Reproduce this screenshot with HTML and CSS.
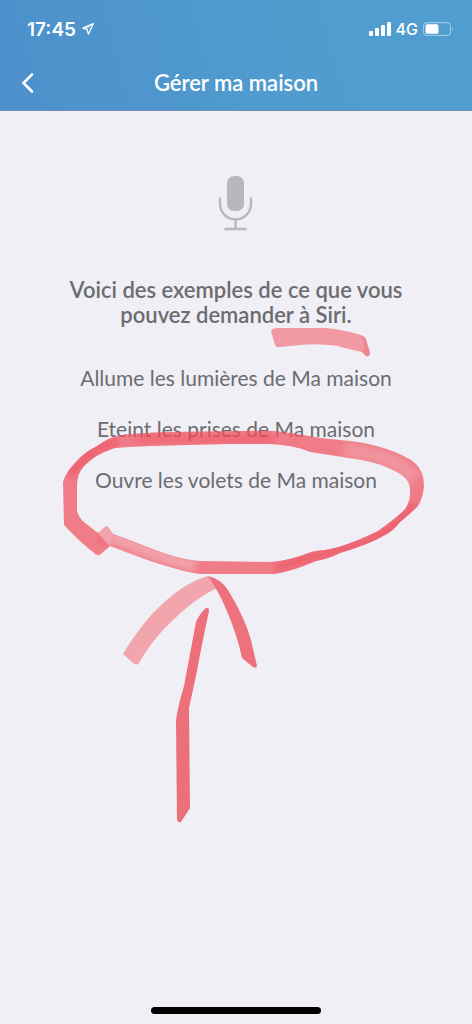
FILE: index.html
```html
<!DOCTYPE html>
<html lang="fr">
<head>
<meta charset="utf-8">
<meta name="viewport" content="width=device-width, initial-scale=1">
<title>Gérer ma maison</title>
<link rel="stylesheet" href="styles.css">
</head>
<body>
<div class="screen">
  <header class="header">
    <div class="status">
      <div class="status-group">
        <span class="time">17:45</span>
        <svg class="location" viewBox="0 0 14 14" aria-hidden="true"><path d="M12.3 1.6 1.8 6.2l4.200 1.300 1.500 4.700z" fill="none" stroke="currentColor" stroke-width="1.3" stroke-linejoin="round"/><path d="M12.3 1.6 6 7.5 1.8 6.2z" fill="currentColor" opacity=".5"/></svg>
      </div>
      <div class="status-group status-right">
        <svg class="signal" viewBox="0 0 22 14" aria-hidden="true"><g fill="currentColor"><rect x="0" y="9" width="4" height="5" rx="1"/><rect x="6" y="6" width="4" height="8" rx="1"/><rect x="12" y="3" width="4" height="11" rx="1"/><rect x="18" y="0" width="4" height="14" rx="1"/></g></svg>
        <span class="network">4G</span>
        <svg class="battery" viewBox="0 0 31 14" aria-hidden="true"><rect x=".6" y=".6" width="26.8" height="12.8" rx="3.5" fill="none" stroke="currentColor" stroke-width="1.2" opacity=".4"/><rect x="2.5" y="2.3" width="13" height="9.5" rx="1.8" fill="currentColor"/><path d="M29 4.8q1.8 2.2 0 4.4z" fill="currentColor" opacity=".6"/></svg>
      </div>
    </div>
    <nav class="nav">
      <button class="back" type="button" aria-label="Retour"><svg viewBox="0 0 14 22" aria-hidden="true"><path d="M12 2.500 3.500 11l8.500 8.500" fill="none" stroke="currentColor" stroke-width="2.6" stroke-linecap="round"/></svg></button>
      <h1 class="title">Gérer ma maison</h1>
    </nav>
  </header>
  <main class="content">
    <svg class="mic" viewBox="0 0 36 56" aria-hidden="true"><rect x="9" y="0" width="17" height="35" rx="7" fill="#b8b8ba"/><path d="M2 21.500V28a15.500 15.500 0 0 0 31 0v-6.500M17.500 43.500v9M6.500 53h22" fill="none" stroke="#b8b8ba" stroke-width="2.400"/></svg>
    <h2 class="intro">Voici des exemples de ce que vous pouvez demander à Siri.</h2>
    <ul class="examples">
      <li>Allume les lumières de Ma maison</li>
      <li>Eteint les prises de Ma maison</li>
      <li>Ouvre les volets de Ma maison</li>
    </ul>
  </main>
  <div class="home-bar"></div>
  <svg class="marker" viewBox="0 0 472 1024" aria-hidden="true">
    <defs>
      <filter id="soft" x="-5%" y="-5%" width="110%" height="110%"><feGaussianBlur stdDeviation=".6"/></filter>
      <filter id="blend" x="-30%" y="-30%" width="160%" height="160%"><feGaussianBlur stdDeviation="3"/></filter>
      <clipPath id="loop-shape"><path clip-rule="evenodd" d="M93 552Q82 544 64 525L63 482Q66 472 75 463Q83 453 97 446Q109 437 122 435Q135 433 170 432L240 431Q270 430 283 432Q305 435 320 438L350 441Q375 444 395 452Q411 459 416 464Q424 472 424 486Q423 498 418 506Q410 514 400 522Q392 532 385 535Q370 544 340 553Q328 559 316 561Q293 571 275 574L200 574Q188 573 150 561L110 546L101 554Q97 557 93 552ZM107 526L113 534Q130 540 150 548Q180 560 200 561L270 562Q285 561 300 556Q314 550 325 550Q345 547 378 531Q400 515 405 509Q411 501 410 488Q409 478 397 472Q380 463 362 460L310 452Q294 445 270 444L225 444L150 446Q126 447 115 448Q103 452 95 457Q82 466 79 474Q77 481 77 485L77 511Q79 518 84 522L98 533Z"/></clipPath>
    </defs>
    <g filter="url(#soft)">
      <path fill="#f27e89" d="M271 331Q272 328 278 328H325Q341 329 361 335Q367 337 367 343L370 353Q369 357 366 356L362 352Q347 349 338 346Q318 343 300 345L280 347Q276 348 275 345Z"/>
      <path fill="#ee6571" d="M361 336Q366 337 367 343L370 353Q369 357 366 356L362 352Q367 346 361 336Z"/>
      <g clip-path="url(#loop-shape)">
        <rect x="55" y="420" width="380" height="165" fill="#f15764"/>
        <g filter="url(#blend)" fill="none">
          <path d="M70 476Q88 447 118 442" stroke="#eb3340" stroke-width="9"/>
          <path d="M135 439H275" stroke="#ef3b48" stroke-width="8"/>
          <path d="M416 505L390 530L365 543L310 558L275 568" stroke="#eb3340" stroke-width="10"/>
          <path d="M110 536L155 554L195 566" stroke="#f38690" stroke-width="13"/>
          <path d="M345 449L390 459L416 478" stroke="#f27680" stroke-width="14"/>
        </g>
      </g>
      <path fill="#f38c95" d="M123 654Q136 632 153 613Q182 583 208 576L216 581L218 588Q195 597 164 629Q149 645 139 663Q137 666 133 663Z"/>
      <path fill="#ec4a57" d="M208 576Q221 579 228 590Q245 618 251 640L257 666Q256 669 253 667L242 658Q237 634 226 609Q219 592 208 576Z"/>
      <path fill="#ec4451" d="M206 608Q209 607 209 611Q201 648 197 671L189 708L190 808L181 822Q178 823 177 820L176 720Q178 706 184 686L196 622Q200 613 206 608Z"/>
      <path fill="#ec4451" opacity=".45" d="M93 538L98 533L110 546L101 547Z"/>
      <path fill="#f38c95" d="M98 533L106 526L113 534L110 546Z"/>
    </g>
  </svg>
</div>
</body>
</html>
```
FILE: styles.css
```css
* { box-sizing: border-box; }
body {
  margin: 0;
  background: #efeff5;
  color: #6c6c70;
  font-family: Lato, "Open Sans", sans-serif;
}
.screen {
  position: relative;
  min-height: 100vh;
  display: flex;
  flex-direction: column;
}
.header {
  padding: 17px 16px 11px;
  background: linear-gradient(75deg, #4c90cb, #509ccf 60%, #509dd0);
  color: #fff;
  border-bottom: 1px solid #718fb5;
}
.status {
  display: flex;
  justify-content: space-between;
  align-items: center;
  height: 24px;
  padding: 0 2px 0 11px;
  font-family: Inter, sans-serif;
}
.status-group {
  display: flex;
  align-items: center;
  gap: 5px;
}
.time { font-size: 19px; font-weight: 600; }
.location { width: 14px; height: 14px; }
.signal { width: 22px; height: 14px; }
.network { font-size: 16px; font-weight: 500; }
.battery { width: 31px; height: 14px; }
.nav {
  display: grid;
  grid-template-columns: 24px 1fr 24px;
  align-items: center;
  height: 32px;
  margin-top: 26px;
}
.back {
  display: flex;
  padding: 0 4px;
  border: 0;
  background: none;
  color: inherit;
}
.back svg { width: 14px; height: 22px; }
.title {
  margin: 0;
  text-align: center;
  font-size: 22px;
  line-height: 32px;
  font-weight: 600;
}
.content {
  flex: 1;
  display: flex;
  flex-direction: column;
  align-items: center;
  padding: 65px 32px 32px;
  text-align: center;
}
.mic { width: 36px; height: 56px; }
.intro {
  max-width: 360px;
  margin: 45px 0 38px;
  font-size: 22px;
  line-height: 25px;
  font-weight: 600;
}
.examples {
  display: grid;
  gap: 25px;
  margin: 0;
  padding: 0;
  list-style: none;
  font-size: 21px;
  line-height: 26px;
}
.home-bar {
  align-self: center;
  width: 36%;
  height: 7px;
  margin-bottom: 10px;
  border-radius: 4px;
  background: #000;
}
.marker {
  position: absolute;
  top: 0;
  left: 50%;
  width: 472px;
  height: 1024px;
  transform: translateX(-50%);
  pointer-events: none;
  opacity: 0.75;
}
```
